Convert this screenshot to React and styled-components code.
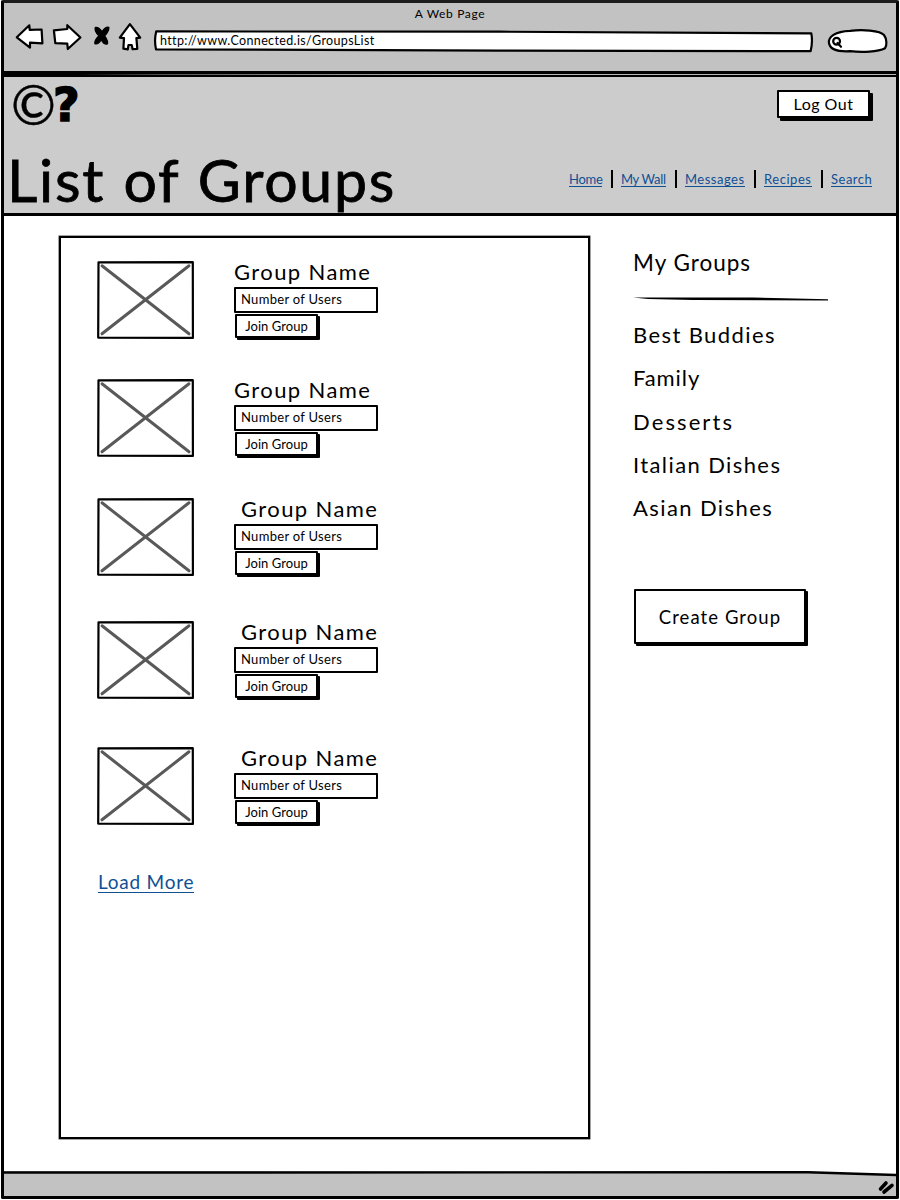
import React from "react";
import styled, { createGlobalStyle } from "styled-components";

const ink = "#000";
const link = "#0f4f94";

const GlobalStyle = createGlobalStyle`
  * { box-sizing: border-box; }
  html, body { margin: 0; padding: 0; background: #fff; }
  body { font-family: Lato, "Liberation Sans", sans-serif; color: ${ink}; }
`;

const BrowserWindow = styled.div`
  display: flex;
  flex-direction: column;
  width: 898px;
  height: 1199px;
  margin: 0 1px;
  border: 3px solid ${ink};
  border-top-color: #1c1c1c;
  border-radius: 2px;
  overflow: hidden;
`;

/* ---------- browser chrome ---------- */

const Toolbar = styled.div`
  height: 71px;
  flex: none;
  background: #c2c2c2;
  border-bottom: 3px solid ${ink};
`;

const WindowTitle = styled.div`
  font-size: 12px;
  line-height: 21px;
  height: 20px;
  letter-spacing: 0.67px;
  text-align: center;
`;

const Controls = styled.div`
  display: flex;
  gap: 8px;
  padding-left: 11px;
`;

const Sketch = styled.svg`
  display: block;
  flex: none;
  overflow: visible;
  stroke: ${ink};
  stroke-width: 2.2;
  stroke-linejoin: round;
  stroke-linecap: round;
  fill: #fff;
`;

const SolidShape = styled.path`
  fill: ${ink};
  stroke-width: ${(p) => p.$stroke || 0};
`;

const OpenStroke = styled.path`
  fill: none;
  stroke: ${(p) => p.$color || ink};
  stroke-width: ${(p) => p.$weight};
`;

const PaperShape = styled.path`
  stroke: none;
`;

const AddressBar = styled.div`
  position: relative;
  width: 666px;
  height: 32px;
`;

const AddressOutline = styled(Sketch)`
  position: absolute;
  inset: 0;
`;

const Address = styled.span`
  position: relative;
  display: block;
  padding: 2px 0 0 7px;
  font-size: 12.5px;
  line-height: 32px;
  letter-spacing: 0.37px;
`;

/* ---------- page header ---------- */

const Seam = styled.div`
  height: 1px;
  flex: none;
  background: linear-gradient(90deg, #000 8%, #555 18%, #b5b5b5 50%);
`;

const Header = styled.header`
  display: flex;
  flex-direction: column;
  justify-content: space-between;
  flex: none;
  height: 141px;
  background: #ccc;
  border-top: 2px solid ${ink};
  border-bottom: 3px solid ${ink};
`;

const HeaderTop = styled.div`
  display: flex;
  justify-content: space-between;
  padding: 13px 26px 0 7px;
`;

const Logo = styled.div`
  display: flex;
  height: 40px;
  margin-top: -17px;
`;

const LogoMark = styled.span`
  font-size: 54px;
  line-height: 63px;
  letter-spacing: -3px;
  -webkit-text-stroke: 0.4px ${ink};
`;

const LogoQuestion = styled.span`
  font: bold 46px/64px "DejaVu Sans", sans-serif;
  -webkit-text-stroke: 1.4px ${ink};
`;

const HeaderBottom = styled.div`
  display: flex;
  justify-content: space-between;
  height: 63px;
  padding: 0 24px 0 3px;
`;

const PageTitle = styled.h1`
  margin: 0;
  font-size: 59px;
  font-weight: 400;
  line-height: 59px;
  letter-spacing: 1.75px;
  word-spacing: 1.5px;
  white-space: nowrap;
  -webkit-text-stroke: 0.8px ${ink};
`;

const Nav = styled.nav`
  display: flex;
  align-items: flex-start;
  padding-top: 20px;
`;

const NavItem = styled.a`
  width: ${(p) => p.$width}px;
  height: 17px;
  border-bottom: 1px solid ${link};
  color: ${link};
  font-size: 13px;
  line-height: 18px;
  letter-spacing: ${(p) => p.$track}px;
  white-space: nowrap;
`;

const NavDivider = styled.span`
  width: 2px;
  height: 18px;
  margin: 0 8px 0 9px;
  background: ${ink};
`;

/* ---------- shared controls ---------- */

const Button = styled.button`
  display: block;
  padding: 0;
  border: 2px solid ${ink};
  border-radius: 1px;
  background: #fff;
  color: ${ink};
  font-family: inherit;
  white-space: nowrap;
`;

const LogOutButton = styled(Button)`
  width: 93px;
  height: 28px;
  box-shadow: 3px 3px 0 ${ink};
  font-size: 16px;
  letter-spacing: 0.5px;
  line-height: 23px;
  padding-bottom: 1px;
`;

const JoinButton = styled(Button)`
  width: 83px;
  height: 24px;
  margin: 1px 0 0 1px;
  box-shadow: 2px 2px 0 ${ink};
  font-size: 13px;
  letter-spacing: 0.05px;
  line-height: 18px;
  padding-bottom: 1px;
`;

const CreateButton = styled(Button)`
  width: 172px;
  height: 55px;
  margin: 51px 0 0 1px;
  box-shadow: 2px 2px 0 ${ink};
  font-size: 18.5px;
  letter-spacing: 1.08px;
`;

/* ---------- body ---------- */

const Main = styled.main`
  position: relative;
  display: flex;
  flex: 1;
  background: #fff;
`;

const Panel = styled.section`
  width: 531px;
  height: 903px;
  margin: 20px 0 0 55px;
  padding: 23px 0 0 36px;
  border: 2px solid ${ink};
  box-shadow: 0 0 0 0.5px #444;
`;

const GroupRow = styled.article`
  display: flex;
  height: 79px;
  margin-bottom: ${(p) => p.$after}px;
`;

const GroupInfo = styled.div`
  margin-left: 40px;
`;

const GroupName = styled.h2`
  height: 26px;
  margin: 0;
  padding-left: ${(p) => (p.$shifted ? 7 : 0)}px;
  font-size: 22px;
  font-weight: 400;
  line-height: 22px;
  letter-spacing: 1.4px;
  white-space: nowrap;
`;

const UserCount = styled.div`
  width: 144px;
  height: 26px;
  padding-left: 5px;
  border: 2px solid ${ink};
  border-radius: 1px;
  font-size: 13px;
  line-height: 21px;
  letter-spacing: 0.3px;
`;

const LoadMore = styled.a`
  display: block;
  width: 96px;
  height: 22px;
  margin-left: 1px;
  border-bottom: 1px solid ${link};
  color: ${link};
  font-size: 19px;
  line-height: 21px;
  letter-spacing: 0.75px;
  white-space: nowrap;
`;

const Sidebar = styled.aside`
  padding: 34px 0 0 43px;
`;

const SideTitle = styled.h2`
  margin: 0;
  font-size: 22.5px;
  font-weight: 400;
  line-height: 26px;
  letter-spacing: 1px;
`;

const SideList = styled.ul`
  margin: 21px 0 0;
  padding: 0;
  list-style: none;
`;

const SideItem = styled.li`
  height: 43.3px;
  font-size: 22px;
  line-height: 25px;
  letter-spacing: ${(p) => p.$track}px;
`;

const Rule = styled(Sketch)`
  margin-top: 21px;
`;

const StatusBar = styled.footer`
  position: relative;
  flex: none;
  height: 25px;
  background: #c2c2c2;
`;

const links = [
  { label: "Home", width: 33, track: -0.3 },
  { label: "My Wall", width: 45, track: -0.3 },
  { label: "Messages", width: 60, track: 0.5 },
  { label: "Recipes", width: 48, track: 0.55 },
  { label: "Search", width: 41, track: 0.5 },
];

const groups = [
  { after: 39, shifted: false },
  { after: 40, shifted: false },
  { after: 44, shifted: true },
  { after: 47, shifted: true },
  { after: 45, shifted: true },
];

const myGroups = [
  { label: "Best Buddies", track: 1.4 },
  { label: "Family", track: 0.9 },
  { label: "Desserts", track: 2.1 },
  { label: "Italian Dishes", track: 1.4 },
  { label: "Asian Dishes", track: 1.4 },
];

const GroupThumb = () => (
  <Sketch width="97" height="78" viewBox="0 0 97 78">
    <path d="M1.5 1.3 L95.8 1.2 L95.9 76.9 L1.2 76.6 Z" />
    <OpenStroke $color="#595959" $weight={3} d="M5 4.8 L92 72.8 M92 4.8 L5 72.8" />
  </Sketch>
);

export default function App() {
  return (
    <>
      <GlobalStyle />
      <BrowserWindow>
        <Toolbar>
          <WindowTitle>A Web Page</WindowTitle>
          <Controls>
            <Sketch width="29" height="32" viewBox="15 23 29 32">
              <path d="M16.8 37.3 L29.3 25.3 L29.7 29.8 L41.6 29.5 L42.4 43.3 L30 42.7 L30 47.6 Z" />
            </Sketch>
            <Sketch width="32" height="32" viewBox="52 23 32 32">
              <path d="M53.9 30.4 L67.3 29 L67.3 25.2 L80.4 37.5 L67.8 49 L67.3 43.6 L55.3 43.2 Z" />
            </Sketch>
            <Sketch width="18" height="32" viewBox="92 23 18 32">
              <SolidShape
                $stroke={1.4}
                d="M95.4 27.4 Q99 26.8 102 32 Q105.5 26.5 108.8 27.4 Q109.3 31 104.6 35.8 Q108.6 41.5 107.2 44 Q104 44.8 101.3 39.6 Q98 44.8 94.9 43.6 Q94.4 40.5 99 35.8 Q94 30.8 95.4 27.4 Z"
              />
            </Sketch>
            <Sketch width="27" height="32" viewBox="118 23 27 32">
              <path d="M129.9 24.2 L140.2 37.6 L136.4 38.2 L137.3 48.8 L132.6 49.2 L131.7 45 L128.5 45 L127.8 49.3 L123.4 48.7 L124 38.2 L119.8 37.7 Z" />
            </Sketch>
            <AddressBar>
              <AddressOutline width="666" height="32" viewBox="153 23 666 32">
                <path d="M156.2 31.4 L500 31.7 L811.3 33.4 Q812.9 42 810.6 51.2 L500 50.7 L156 49.3 Q154 40 156.2 31.4 Z" />
              </AddressOutline>
              <Address>http://www.Connected.is/GroupsList</Address>
            </AddressBar>
            <Sketch width="62" height="32" viewBox="827 23 62 32">
              <path d="M829 43 C828 37 835 31.3 850 30.8 C862 29.3 880 30.2 884 35 C887 39 887 46 885 48.3 C878 52 862 52.5 850 51.2 C838 51.8 830 50 829 43 Z" />
              <circle cx="836.6" cy="41.2" r="3.4" />
              <path d="M837.5 43 L841 46.8" />
            </Sketch>
          </Controls>
        </Toolbar>
        <Seam />
        <Header>
          <HeaderTop>
            <Logo>
              <LogoMark>©</LogoMark>
              <LogoQuestion>?</LogoQuestion>
            </Logo>
            <LogOutButton>Log Out</LogOutButton>
          </HeaderTop>
          <HeaderBottom>
            <PageTitle>List of Groups</PageTitle>
            <Nav>
              {links.map((l, i) => (
                <React.Fragment key={l.label}>
                  {i > 0 && <NavDivider />}
                  <NavItem $width={l.width} $track={l.track}>
                    {l.label}
                  </NavItem>
                </React.Fragment>
              ))}
            </Nav>
          </HeaderBottom>
        </Header>
        <Main>
          <Panel>
            {groups.map((g, i) => (
              <GroupRow key={i} $after={g.after}>
                <GroupThumb />
                <GroupInfo>
                  <GroupName $shifted={g.shifted}>Group Name</GroupName>
                  <UserCount>Number of Users</UserCount>
                  <JoinButton>Join Group</JoinButton>
                </GroupInfo>
              </GroupRow>
            ))}
            <LoadMore>Load More</LoadMore>
          </Panel>
          <Sidebar>
            <SideTitle>My Groups</SideTitle>
            <Rule width="195" height="4" viewBox="0 0 195 4">
              <SolidShape d="M0 0.6 L120 0.6 L195 2.2 L195 3.6 L60 3 L15 2 Z" />
            </Rule>
            <SideList>
              {myGroups.map((g) => (
                <SideItem key={g.label} $track={g.track}>
                  {g.label}
                </SideItem>
              ))}
            </SideList>
            <CreateButton>Create Group</CreateButton>
          </Sidebar>
        </Main>
        <StatusBar>
          <Sketch width="892" height="25" viewBox="4 1171 892 25">
            <PaperShape d="M800 1170 L897 1170 L897 1175 L808 1172 Z" />
            <OpenStroke $weight={2.4} d="M3 1172.5 L808 1172.3 L897 1175" />
            <OpenStroke $weight={3.6} d="M880.5 1189 L886 1183 M884 1192 L892 1185.3" />
          </Sketch>
        </StatusBar>
      </BrowserWindow>
    </>
  );
}
